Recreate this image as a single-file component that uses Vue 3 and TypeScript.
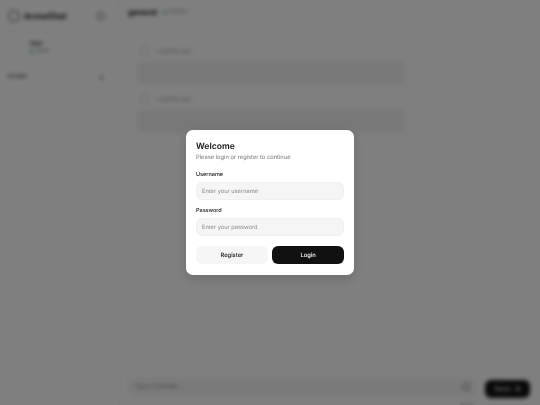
<script setup lang="ts">
const messages = [
  { id: 1, name: "Loading user" },
  { id: 2, name: "Loading user" },
];
</script>

<template>
  <div class="app">
    <div class="behind">
      <aside class="sidebar">
        <div class="brand">
          <span class="brand__logo"></span>
          <span class="brand__name">ArrowChat</span>
          <span class="brand__btn"></span>
        </div>
        <div class="me">
          <div class="me__name">User</div>
          <div class="me__status"><i class="dot"></i>Online</div>
        </div>
        <div class="rooms">
          <span>ROOMS</span>
          <span class="rooms__plus">+</span>
        </div>
      </aside>
      <main class="chat">
        <header class="chat__head">
          <span class="chat__title">general</span>
          <i class="dot"></i>
          <span class="chat__online">0 Online</span>
        </header>
        <div class="messages">
          <div v-for="m in messages" :key="m.id" class="msg">
            <div class="msg__who">
              <span class="msg__avatar"></span>
              <span class="msg__name">{{ m.name }}</span>
            </div>
            <div class="msg__body"></div>
          </div>
        </div>
        <div class="composer">
          <div class="composer__col">
            <div class="composer__input">
              <span>Type a message...</span>
              <span class="composer__icon"></span>
            </div>
            <div class="composer__hint"></div>
          </div>
          <div class="composer__send">Send <b>➤</b></div>
        </div>
      </main>
    </div>

    <div class="overlay">
      <form class="modal" @submit.prevent>
        <h2 class="modal__title">Welcome</h2>
        <p class="modal__sub">Please login or register to continue</p>
        <label class="field">
          <span class="field__label">Username</span>
          <input class="field__input" type="text" placeholder="Enter your username" />
        </label>
        <label class="field">
          <span class="field__label">Password</span>
          <input class="field__input" type="password" placeholder="Enter your password" />
        </label>
        <div class="actions">
          <button type="button" class="btn btn--ghost">Register</button>
          <button type="submit" class="btn btn--dark">Login</button>
        </div>
      </form>
    </div>
  </div>
</template>

<style>
html,
body {
  margin: 0;
  background: #fff;
}
</style>

<style scoped>
.app {
  position: relative;
  width: 540px;
  height: 405px;
  overflow: hidden;
  font-family: Inter, "Liberation Sans", sans-serif;
  color: #111;
  text-rendering: geometricPrecision;
}

.behind {
  display: flex;
  width: 540px;
  height: 405px;
}

.sidebar {
  width: 120px;
  flex-shrink: 0;
  border-right: 1px solid #eee;
  box-sizing: border-box;
}

.brand {
  display: flex;
  align-items: center;
  height: 32px;
  padding: 0 14px 0 8px;
  border-bottom: 1px solid #f2f2f2;
  box-sizing: border-box;
}

.brand__logo {
  width: 10px;
  height: 10px;
  border: 1.5px solid #444;
  border-radius: 50%;
}

.brand__name {
  margin-left: 4px;
  font-size: 8px;
  font-weight: 700;
}

.brand__btn {
  width: 6px;
  height: 6px;
  margin-left: auto;
  border: 1px solid #666;
  border-radius: 50%;
}

.me {
  box-sizing: border-box;
  height: 33px;
  padding: 9px 0 0 30px;
}

.me__name {
  font-size: 5.5px;
  line-height: 7px;
  font-weight: 700;
}

.me__status {
  display: flex;
  align-items: center;
  font-size: 4.5px;
  line-height: 7px;
  color: #666;
}

.dot {
  width: 3px;
  height: 3px;
  margin-right: 2px;
  border-radius: 50%;
  background: #22c55e;
}

.rooms {
  display: flex;
  justify-content: space-between;
  align-items: center;
  height: 24px;
  padding: 0 15px 0 8px;
  font-size: 5px;
  font-weight: 500;
  color: #444;
}

.rooms__plus {
  font-size: 8px;
}

.chat {
  display: flex;
  flex: 1;
  flex-direction: column;
  min-width: 0;
}

.chat__head {
  display: flex;
  align-items: center;
  height: 24px;
  padding-left: 8px;
}

.chat__title {
  margin-right: 6px;
  font-size: 7.8px;
  font-weight: 700;
}

.chat__online {
  font-size: 5px;
  color: #777;
}

.messages {
  display: flex;
  flex: 1;
  flex-direction: column;
  gap: 9px;
  padding: 22px 135px 0 18px;
}

.msg__who {
  display: flex;
  align-items: center;
  gap: 6px;
  height: 10px;
  margin-bottom: 5px;
  padding-left: 2px;
}

.msg__avatar {
  width: 8px;
  height: 8px;
  border: 1px solid #ccc;
  border-radius: 50%;
}

.msg__name {
  font-size: 5.8px;
  color: #999;
}

.msg__body {
  height: 24px;
  border-radius: 4px;
  background: #f1f1f1;
}

.composer {
  display: flex;
  gap: 8px;
  align-items: flex-start;
  height: 27px;
  padding: 0 10px 0 8px;
}

.composer__col {
  flex: 1;
  min-width: 0;
}

.composer__input {
  display: flex;
  align-items: center;
  justify-content: space-between;
  height: 18px;
  padding: 0 7px;
  border-radius: 5px;
  background: #f5f5f5;
  font-size: 5.5px;
  color: #777;
}

.composer__hint {
  width: 14px;
  height: 4px;
  margin: 7px 3px 0 auto;
  background: #ddd;
}

.composer__icon {
  width: 6px;
  height: 6px;
  border: 1px solid #777;
  border-radius: 50%;
}

.composer__send {
  display: flex;
  gap: 5px;
  align-items: center;
  justify-content: center;
  width: 45px;
  height: 18px;
  margin-top: 2px;
  border-radius: 6px;
  background: #111;
  color: #fff;
  font-size: 6.5px;
}

.overlay {
  position: absolute;
  inset: 0;
  display: flex;
  align-items: center;
  justify-content: center;
  background: rgba(0, 0, 0, 0.5);
  backdrop-filter: blur(2.2px);
}

.modal {
  display: flex;
  flex-direction: column;
  box-sizing: border-box;
  width: 168px;
  height: 145px;
  padding: 11px 10px;
  border-radius: 7px;
  background: #fff;
  box-shadow: 0 4px 12px rgba(0, 0, 0, 0.15);
  filter: blur(0.25px);
}

.modal__title {
  margin: 0 0 1px;
  padding-top: 1px;
  font-size: 8.6px;
  line-height: 11px;
  font-weight: 600;
}

.modal__sub {
  margin: 0 0 9px;
  font-size: 5.75px;
  line-height: 8px;
  color: #777;
}

.field {
  display: flex;
  flex-direction: column;
  margin-bottom: 7px;
}

.field__label {
  margin-bottom: 3px;
  padding-top: 1px;
  font-size: 5.5px;
  line-height: 7px;
  font-weight: 500;
}

.field__input {
  box-sizing: border-box;
  width: 100%;
  height: 18px;
  padding: 0 5px;
  border: 1px solid #f0f0f0;
  border-radius: 6px;
  outline: none;
  background: #f5f5f5;
  font-family: inherit;
  font-size: 5.7px;
  text-rendering: geometricPrecision;
}

.field__input::placeholder {
  color: #888;
}

.actions {
  display: flex;
  gap: 4.5px;
  margin-top: 3px;
}

.btn {
  flex: 1;
  height: 18px;
  padding: 0;
  border: none;
  border-radius: 6px;
  font-family: inherit;
  font-size: 5.8px;
  font-weight: 500;
  text-rendering: geometricPrecision;
}

.btn--ghost {
  background: #f5f5f5;
  color: #111;
}

.btn--dark {
  background: #111;
  color: #fff;
}
</style>
